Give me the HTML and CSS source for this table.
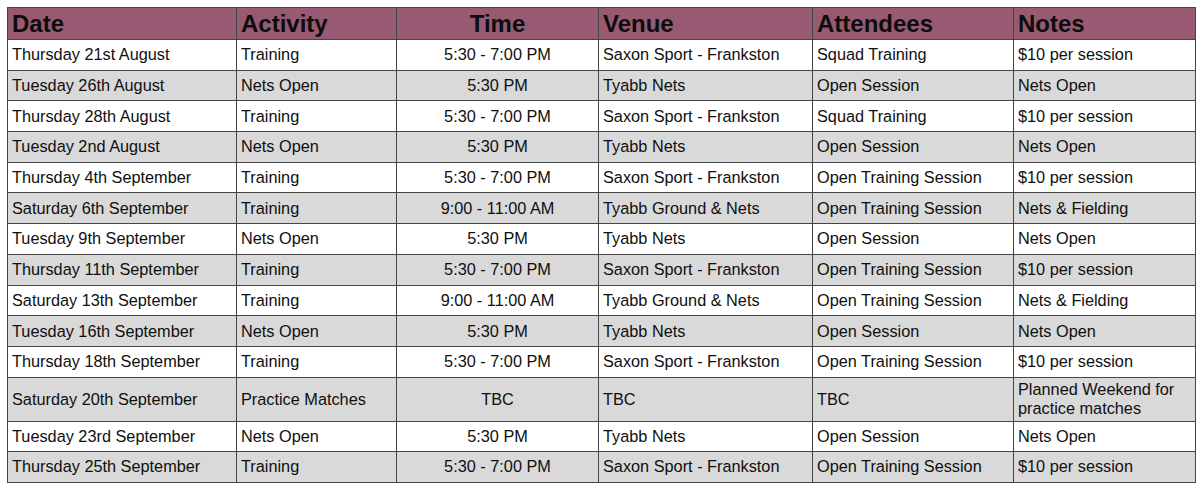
FILE: index.html
```html
<!DOCTYPE html>
<html>
<head>
<meta charset="utf-8">
<link rel="stylesheet" href="styles.css">
</head>
<body>
<table class="schedule">
  <colgroup>
    <col class="c-date"><col class="c-act"><col class="c-time"><col class="c-venue"><col class="c-att"><col class="c-notes">
  </colgroup>
  <thead>
    <tr class="head">
      <th>Date</th><th>Activity</th><th class="center">Time</th><th>Venue</th><th>Attendees</th><th>Notes</th>
    </tr>
  </thead>
  <tbody>
    <tr class="white"><td>Thursday 21st August</td><td>Training</td><td class="center">5:30 - 7:00 PM</td><td>Saxon Sport - Frankston</td><td>Squad Training</td><td>$10 per session</td></tr>
    <tr class="grey"><td>Tuesday 26th August</td><td>Nets Open</td><td class="center">5:30 PM</td><td>Tyabb Nets</td><td>Open Session</td><td>Nets Open</td></tr>
    <tr class="white"><td>Thursday 28th August</td><td>Training</td><td class="center">5:30 - 7:00 PM</td><td>Saxon Sport - Frankston</td><td>Squad Training</td><td>$10 per session</td></tr>
    <tr class="grey"><td>Tuesday 2nd August</td><td>Nets Open</td><td class="center">5:30 PM</td><td>Tyabb Nets</td><td>Open Session</td><td>Nets Open</td></tr>
    <tr class="white"><td>Thursday 4th September</td><td>Training</td><td class="center">5:30 - 7:00 PM</td><td>Saxon Sport - Frankston</td><td>Open Training Session</td><td>$10 per session</td></tr>
    <tr class="grey"><td>Saturday 6th September</td><td>Training</td><td class="center">9:00 - 11:00 AM</td><td>Tyabb Ground &amp; Nets</td><td>Open Training Session</td><td>Nets &amp; Fielding</td></tr>
    <tr class="white"><td>Tuesday 9th September</td><td>Nets Open</td><td class="center">5:30 PM</td><td>Tyabb Nets</td><td>Open Session</td><td>Nets Open</td></tr>
    <tr class="grey"><td>Thursday 11th September</td><td>Training</td><td class="center">5:30 - 7:00 PM</td><td>Saxon Sport - Frankston</td><td>Open Training Session</td><td>$10 per session</td></tr>
    <tr class="white"><td>Saturday 13th September</td><td>Training</td><td class="center">9:00 - 11:00 AM</td><td>Tyabb Ground &amp; Nets</td><td>Open Training Session</td><td>Nets &amp; Fielding</td></tr>
    <tr class="grey"><td>Tuesday 16th September</td><td>Nets Open</td><td class="center">5:30 PM</td><td>Tyabb Nets</td><td>Open Session</td><td>Nets Open</td></tr>
    <tr class="white"><td>Thursday 18th September</td><td>Training</td><td class="center">5:30 - 7:00 PM</td><td>Saxon Sport - Frankston</td><td>Open Training Session</td><td>$10 per session</td></tr>
    <tr class="grey tall"><td>Saturday 20th September</td><td>Practice Matches</td><td class="center">TBC</td><td>TBC</td><td>TBC</td><td>Planned Weekend for practice matches</td></tr>
    <tr class="white short"><td>Tuesday 23rd September</td><td>Nets Open</td><td class="center">5:30 PM</td><td>Tyabb Nets</td><td>Open Session</td><td>Nets Open</td></tr>
    <tr class="grey short"><td>Thursday 25th September</td><td>Training</td><td class="center">5:30 - 7:00 PM</td><td>Saxon Sport - Frankston</td><td>Open Training Session</td><td>$10 per session</td></tr>
  </tbody>
</table>
</body>
</html>
```

FILE: styles.css
```css
html, body {
  margin: 0;
  padding: 0;
  background: #ffffff;
}

body {
  padding: 7px 0 0 7px;
  font-family: "Liberation Sans", Arial, sans-serif;
  color: #111111;
}

.schedule {
  border-collapse: collapse;
  table-layout: fixed;
  width: 1188px;
  border: 1px solid #404040;
}

.c-date { width: 229px; }
.c-act { width: 160px; }
.c-time { width: 202px; }
.c-venue { width: 214px; }
.c-att { width: 201px; }
.c-notes { width: 182px; }

.schedule th,
.schedule td {
  border: 1px solid #454545;
  padding: 0 4px;
  text-align: left;
  vertical-align: middle;
  white-space: normal;
}

.head {
  height: 32px;
  background: #975a72;
}

.head th {
  font-size: 24px;
  font-weight: bold;
  color: #0d0d0d;
  line-height: 26px;
}

.schedule td {
  font-size: 16.3px;
  line-height: 19px;
  color: #0f0f0f;
}

.schedule tbody tr {
  height: 30.7px;
}

.schedule tbody tr.tall {
  height: 44px;
}

.schedule tbody tr.short {
  height: 30.5px;
}

.white { background: #ffffff; }
.grey { background: #d9d9d9; }

.schedule .center { text-align: center; }
```
